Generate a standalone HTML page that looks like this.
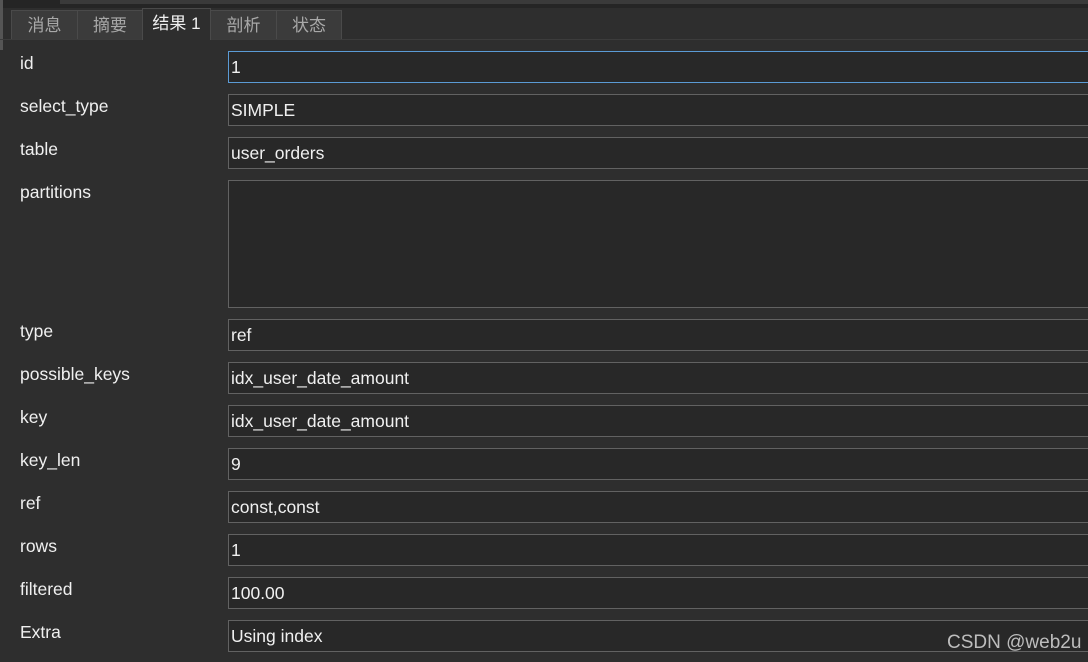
<!DOCTYPE html>
<html><head><meta charset="utf-8"><style>
body{margin:0;width:1088px;height:662px;background:#2e2e2e;overflow:hidden;position:relative;font-family:"Liberation Sans","Noto Sans CJK SC",sans-serif;color:#e8e8e8}
.top{position:absolute;left:0;top:0;width:1088px;height:8px;background:#252525}
.top2{position:absolute;left:60px;top:0;width:1028px;height:4px;background:#3a3a3a}
.sb{position:absolute;left:0;top:0;width:3px;height:50px;background:#555}
.tabbar{position:absolute;left:0;top:39px;width:1088px;height:1px;background:#3c3c3c}
.tab{position:absolute;top:10px;height:29px;background:#3b3b3b;border:1px solid #4a4a4a;border-bottom:none;box-sizing:border-box;color:#a8a8a8;font-size:17px;text-align:center;line-height:30px}
.tab.a{top:8px;height:32px;background:#2e2e2e;color:#f0f0f0;line-height:29px}
.lbl{position:absolute;left:20px;font-size:17.5px;color:#f0f0f0}
.in{position:absolute;left:228px;width:870px;height:32px;box-sizing:border-box;border:1px solid #626262;background:#282828;font-size:17.5px;line-height:30px;padding-left:2px;color:#f0f0f0}
.wm{position:absolute;left:947px;top:632px;font-size:19px;color:#bdbdbd}
</style></head><body>
<div class="top"></div><div class="top2"></div><div class="sb"></div>
<div class="tabbar"></div>
<div class="tab" style="left:11px;width:67px">消息</div>
<div class="tab" style="left:77px;width:66px">摘要</div>
<div class="tab a" style="left:142px;width:69px">结果 1</div>
<div class="tab" style="left:210px;width:67px">剖析</div>
<div class="tab" style="left:276px;width:66px">状态</div>

<div class="lbl" style="top:53px">id</div><div class="in" style="top:51px;border-color:#5b9bd5">1</div>
<div class="lbl" style="top:96px">select_type</div><div class="in" style="top:94px">SIMPLE</div>
<div class="lbl" style="top:139px">table</div><div class="in" style="top:137px">user_orders</div>
<div class="lbl" style="top:182px">partitions</div><div class="in" style="top:180px;height:128px"></div>
<div class="lbl" style="top:321px">type</div><div class="in" style="top:319px">ref</div>
<div class="lbl" style="top:364px">possible_keys</div><div class="in" style="top:362px">idx_user_date_amount</div>
<div class="lbl" style="top:407px">key</div><div class="in" style="top:405px">idx_user_date_amount</div>
<div class="lbl" style="top:450px">key_len</div><div class="in" style="top:448px">9</div>
<div class="lbl" style="top:493px">ref</div><div class="in" style="top:491px">const,const</div>
<div class="lbl" style="top:536px">rows</div><div class="in" style="top:534px">1</div>
<div class="lbl" style="top:579px">filtered</div><div class="in" style="top:577px">100.00</div>
<div class="lbl" style="top:622px">Extra</div><div class="in" style="top:620px">Using index</div>
<div class="wm">CSDN @web2u</div>
</body></html>
